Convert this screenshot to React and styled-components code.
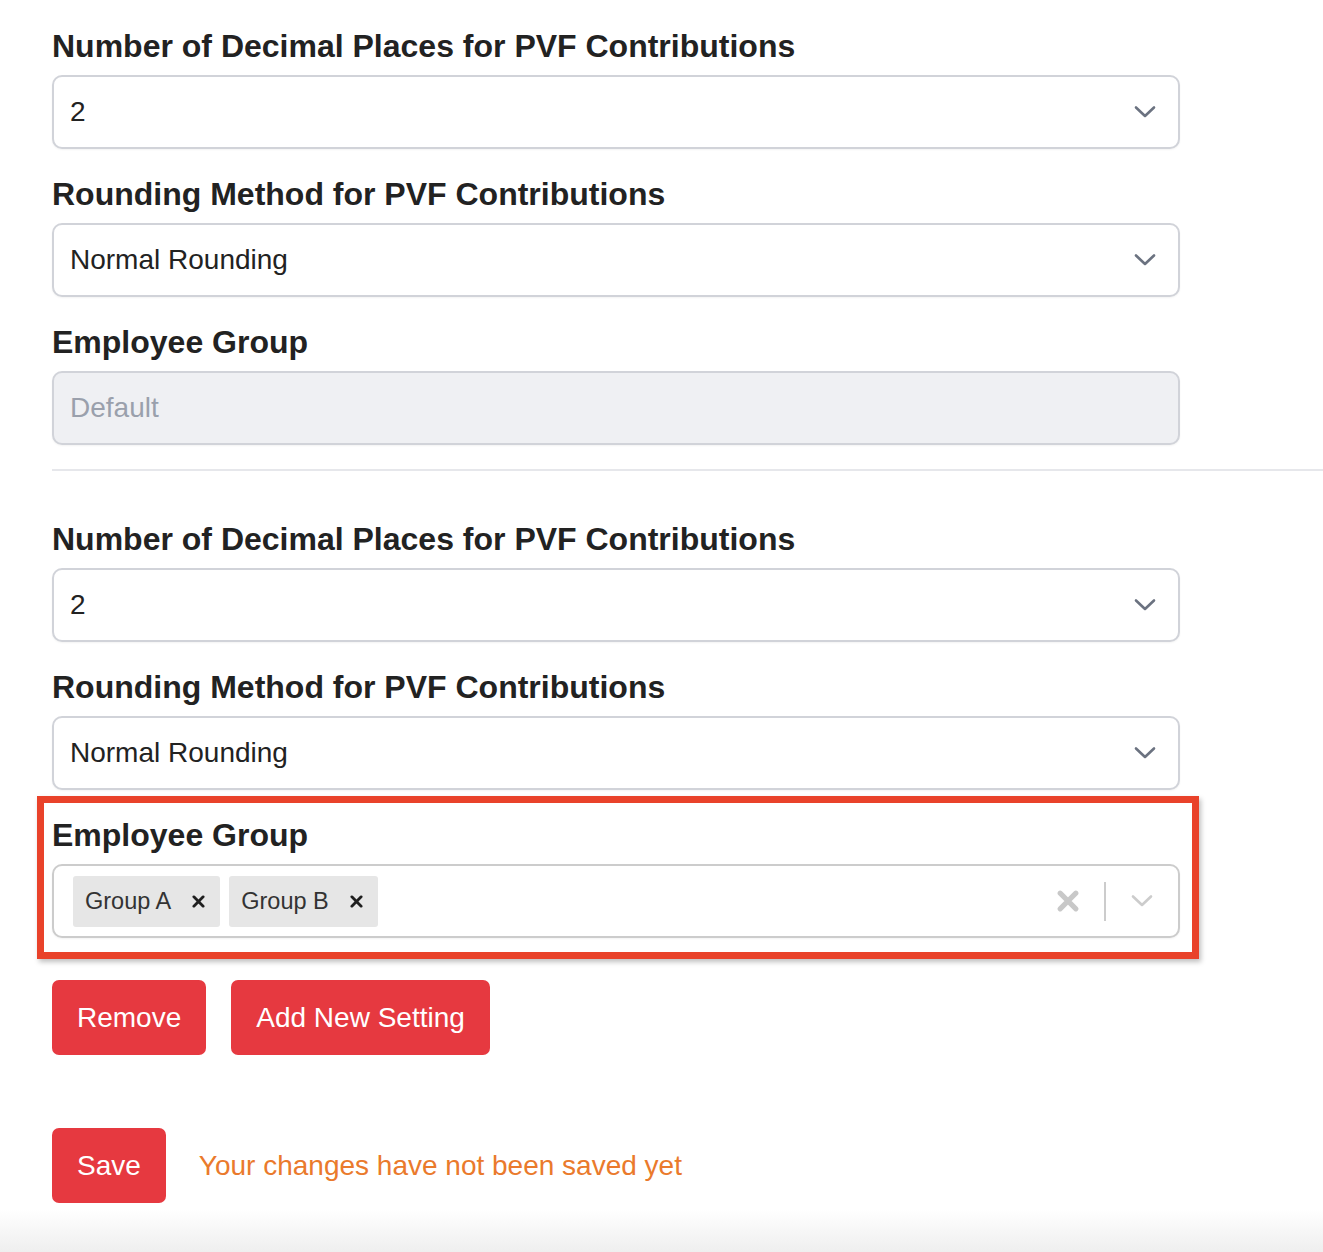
import React from "react";
import styled, { createGlobalStyle } from "styled-components";

// colors
const textDark = "#222222";
const borderGray = "#d1d3d9";
const brandRed = "#e63940";

const GlobalStyle = createGlobalStyle`
  html, body {
    margin: 0;
    padding: 0;
    background: #ffffff;
    font-family: "Liberation Sans", Arial, Helvetica, sans-serif;
    color: ${textDark};
  }
`;

const Page = styled.div`
  width: 1323px;
  min-height: 1252px;
  display: flex;
  flex-direction: column;
  overflow: hidden;
`;

const Form = styled.div`
  padding: 28px 0 0 52px;
  display: flex;
  flex-direction: column;
`;

const Group = styled.div`
  display: flex;
  flex-direction: column;
  gap: 27px;
`;

const Field = styled.div`
  position: relative;
  width: 1128px;
  display: flex;
  flex-direction: column;
  gap: 11px;

  ${(p) =>
    p.$highlight &&
    `
    &::after {
      content: "";
      position: absolute;
      left: -15px;
      top: -21px;
      right: -19px;
      bottom: -21px;
      border: 7px solid #e9422a;
      box-shadow: 2px 3px 5px rgba(0, 0, 0, 0.25);
      pointer-events: none;
    }
  `}
`;

const Label = styled.label`
  font-size: 32px;
  font-weight: 700;
  line-height: 36px;
  color: ${textDark};
`;

const Box = styled.div`
  box-sizing: border-box;
  height: 74px;
  border: 2px solid ${(p) => (p.$multi ? "#cccccc" : borderGray)};
  border-radius: 10px;
  background: ${(p) => (p.$disabled ? "#eff0f3" : "#ffffff")};
  box-shadow: 0 1px 2px rgba(0, 0, 0, 0.05);
  display: flex;
  align-items: center;
  padding: 0 ${(p) => (p.$multi ? "0" : "22px")} 0 ${(p) => (p.$multi ? "19px" : "16px")};
`;

const Value = styled.span`
  flex: 1;
  font-size: 28px;
  color: ${(p) => (p.$muted ? "#9aa0ac" : textDark)};
`;

const Chips = styled.div`
  flex: 1;
  display: flex;
  gap: 9px;
`;

const Chip = styled.div`
  height: 51px;
  display: flex;
  align-items: center;
  background: #e6e6e6;
  border-radius: 3px;
  padding: 0 15px 0 12px;
  gap: 21px;
  font-size: 23.5px;
  color: #333333;
`;

const ChipX = styled.span`
  display: flex;
  align-items: center;
`;

const Indicators = styled.div`
  display: flex;
  align-items: center;
  height: 100%;
`;

const IconCell = styled.div`
  width: 72px;
  display: flex;
  align-items: center;
  justify-content: center;
`;

const Separator = styled.span`
  width: 2px;
  height: 39px;
  background: #cccccc;
`;

const Divider = styled.hr`
  border: 0;
  height: 2px;
  background: #e6e7eb;
  margin: 24px 0 50px;
`;

const Actions = styled.div`
  display: flex;
  gap: 25px;
  margin-top: 42px;
`;

const Button = styled.button`
  height: 75px;
  padding: 0 25px;
  border: 0;
  border-radius: 7px;
  background: ${brandRed};
  color: #ffffff;
  font-family: inherit;
  font-size: 28px;
  cursor: pointer;
`;

const SaveRow = styled.div`
  display: flex;
  align-items: center;
  gap: 33px;
  margin-top: 73px;
`;

const Notice = styled.span`
  font-size: 28px;
  color: #ea7a2c;
`;

const Footer = styled.div`
  flex: 1;
  margin-top: 6px;
  min-height: 45px;
  background: linear-gradient(#ffffff, #eeeeee);
`;

function Chevron({ color = "#6b7280" }) {
  return (
    <svg width="22" height="14" viewBox="0 0 22 14" fill="none">
      <path d="M2 2.5 L11 11 L20 2.5" stroke={color} strokeWidth="2.6" strokeLinecap="round" strokeLinejoin="round" />
    </svg>
  );
}

function Cross({ size = 14, color = "#222", width = 3 }) {
  return (
    <svg width={size} height={size} viewBox="0 0 14 14" fill="none">
      <path d="M2 2 L12 12 M12 2 L2 12" stroke={color} strokeWidth={width} strokeLinecap="round" />
    </svg>
  );
}

function Select({ value, disabled }) {
  return (
    <Box $disabled={disabled}>
      <Value $muted={disabled}>{value}</Value>
      {!disabled && <Chevron />}
    </Box>
  );
}

function MultiSelect({ values }) {
  return (
    <Box $multi>
      <Chips>
        {values.map((v) => (
          <Chip key={v}>
            {v}
            <ChipX>
              <Cross size={13} color="#1f1f1f" width={3} />
            </ChipX>
          </Chip>
        ))}
      </Chips>
      <Indicators>
        <IconCell>
          <Cross size={22} color="#c8c8c8" width={3.2} />
        </IconCell>
        <Separator />
        <IconCell>
          <Chevron color="#cccccc" />
        </IconCell>
      </Indicators>
    </Box>
  );
}

export default function App() {
  return (
    <>
      <GlobalStyle />
      <Page>
        <Form>
          {/* first setting */}
          <Group>
            <Field>
              <Label>Number of Decimal Places for PVF Contributions</Label>
              <Select value="2" />
            </Field>
            <Field>
              <Label>Rounding Method for PVF Contributions</Label>
              <Select value="Normal Rounding" />
            </Field>
            <Field>
              <Label>Employee Group</Label>
              <Select value="Default" disabled />
            </Field>
          </Group>

          <Divider />

          {/* second setting */}
          <Group>
            <Field>
              <Label>Number of Decimal Places for PVF Contributions</Label>
              <Select value="2" />
            </Field>
            <Field>
              <Label>Rounding Method for PVF Contributions</Label>
              <Select value="Normal Rounding" />
            </Field>
            <Field $highlight>
              <Label>Employee Group</Label>
              <MultiSelect values={["Group A", "Group B"]} />
            </Field>
          </Group>

          <Actions>
            <Button>Remove</Button>
            <Button>Add New Setting</Button>
          </Actions>

          <SaveRow>
            <Button>Save</Button>
            <Notice>Your changes have not been saved yet</Notice>
          </SaveRow>
        </Form>
        <Footer />
      </Page>
    </>
  );
}
